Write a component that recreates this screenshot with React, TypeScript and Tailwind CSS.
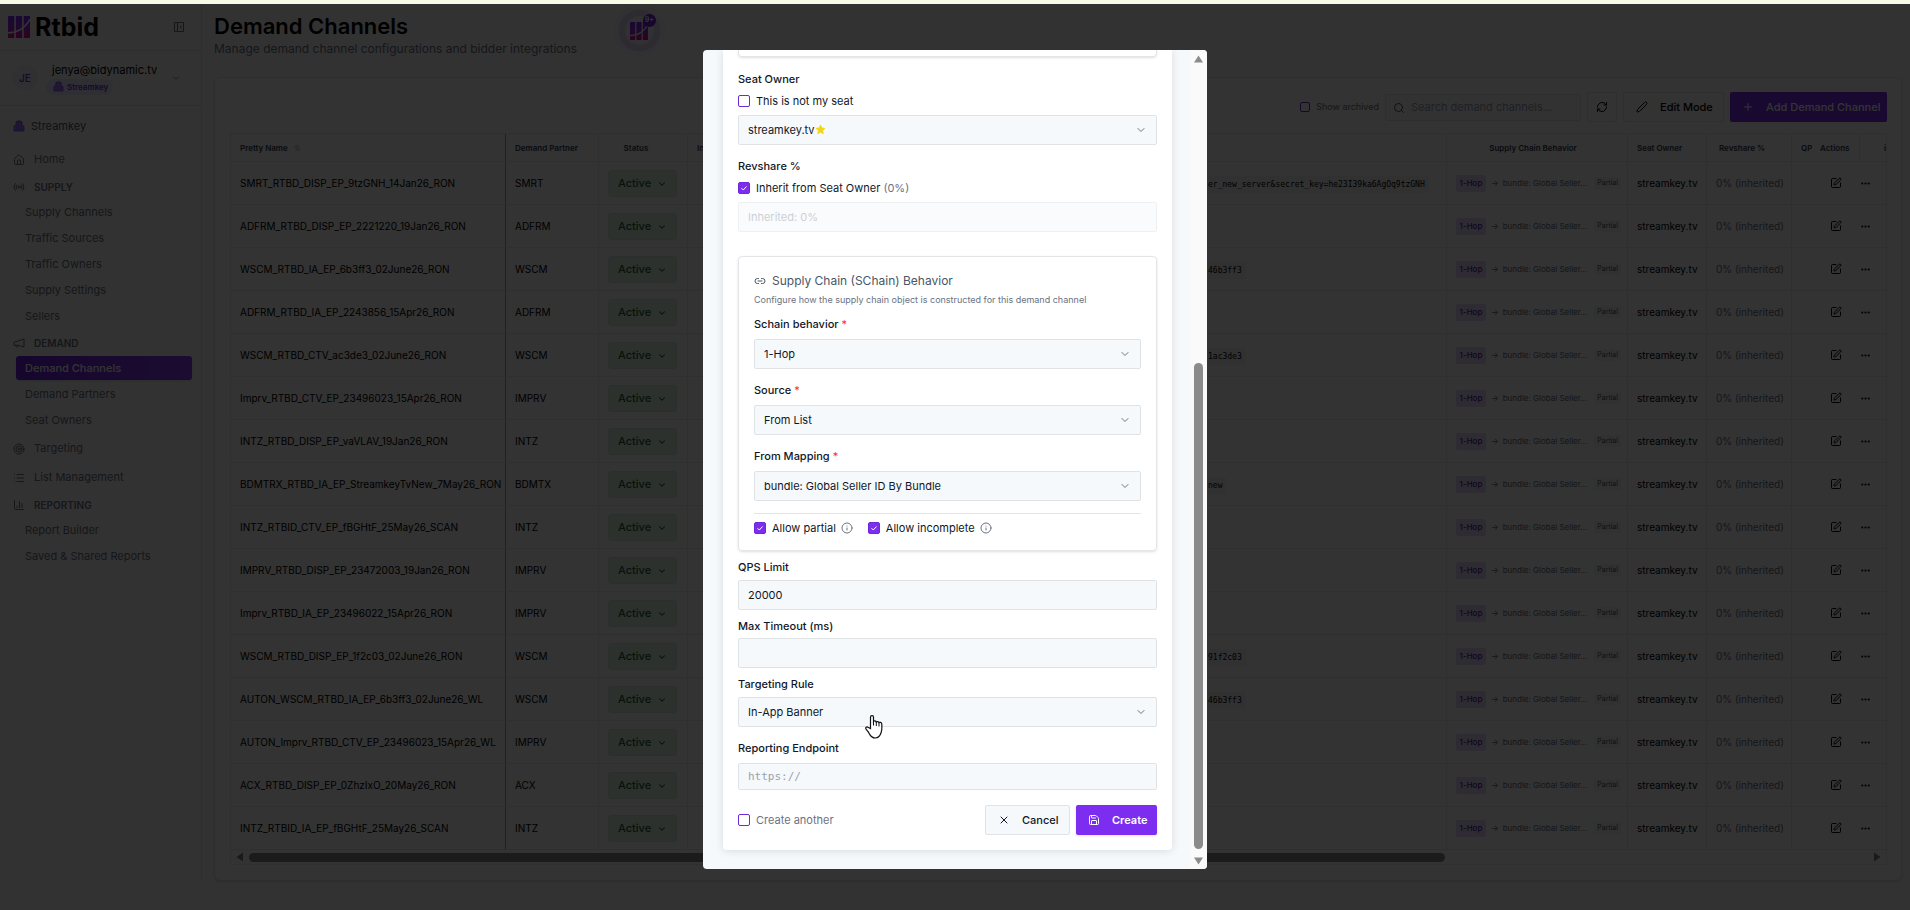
import React, { useState } from "react";
import {
  ChartColumn,
  ChevronDown,
  Ellipsis,
  House,
  Info,
  Link2,
  List,
  Pen,
  Plus,
  Radio,
  RefreshCw,
  Save,
  Search,
  SquarePen,
  Target,
  X,
} from "lucide-react";

const rows = [
  { name: "SMRT_RTBD_DISP_EP_9tzGNH_14Jan26_RON", partner: "SMRT", endpoint: "er_new_server&secret_key=he23I39ka6AgOq9tzGNH" },
  { name: "ADFRM_RTBD_DISP_EP_2221220_19Jan26_RON", partner: "ADFRM", endpoint: "" },
  { name: "WSCM_RTBD_IA_EP_6b3ff3_02June26_RON", partner: "WSCM", endpoint: "46b3ff3" },
  { name: "ADFRM_RTBD_IA_EP_2243856_15Apr26_RON", partner: "ADFRM", endpoint: "" },
  { name: "WSCM_RTBD_CTV_ac3de3_02June26_RON", partner: "WSCM", endpoint: "1ac3de3" },
  { name: "Imprv_RTBD_CTV_EP_23496023_15Apr26_RON", partner: "IMPRV", endpoint: "" },
  { name: "INTZ_RTBD_DISP_EP_vaVLAV_19Jan26_RON", partner: "INTZ", endpoint: "" },
  { name: "BDMTRX_RTBD_IA_EP_StreamkeyTvNew_7May26_RON", partner: "BDMTX", endpoint: "new" },
  { name: "INTZ_RTBID_CTV_EP_fBGHtF_25May26_SCAN", partner: "INTZ", endpoint: "" },
  { name: "IMPRV_RTBD_DISP_EP_23472003_19Jan26_RON", partner: "IMPRV", endpoint: "" },
  { name: "Imprv_RTBD_IA_EP_23496022_15Apr26_RON", partner: "IMPRV", endpoint: "" },
  { name: "WSCM_RTBD_DISP_EP_1f2c03_02June26_RON", partner: "WSCM", endpoint: "91f2c03" },
  { name: "AUTON_WSCM_RTBD_IA_EP_6b3ff3_02June26_WL", partner: "WSCM", endpoint: "46b3ff3" },
  { name: "AUTON_Imprv_RTBD_CTV_EP_23496023_15Apr26_WL", partner: "IMPRV", endpoint: "" },
  { name: "ACX_RTBD_DISP_EP_0ZhzIxO_20May26_RON", partner: "ACX", endpoint: "" },
  { name: "INTZ_RTBID_IA_EP_fBGHtF_25May26_SCAN", partner: "INTZ", endpoint: "" },
];

function LogoMark({ className }: { className?: string }) {
  return (
    <svg viewBox="0 0 42 42" className={className} aria-hidden="true">
      <defs>
        <linearGradient id="mark" x1="0" y1="0" x2="0" y2="1">
          <stop offset="0" stopColor="#7c2df5" />
          <stop offset="0.5" stopColor="#9d28e0" />
          <stop offset="1" stopColor="#e0108c" />
        </linearGradient>
        <clipPath id="bars">
          <rect x="0" y="0" width="12" height="42" rx="1" />
          <rect x="15" y="0" width="12" height="42" rx="1" />
          <rect x="30" y="0" width="12" height="42" rx="1" />
        </clipPath>
      </defs>
      <rect width="42" height="42" fill="url(#mark)" clipPath="url(#bars)" />
      <path d="M0 32C18 32 32 24 42 6" fill="none" stroke="#fafafa" strokeWidth="3" />
    </svg>
  );
}

function OrgIcon({ className }: { className?: string }) {
  return (
    <svg viewBox="0 0 24 24" className={className} aria-hidden="true">
      <path
        d="M5 6a5 5 0 0 1 5-5h4a5 5 0 0 1 5 5v4a4 4 0 0 1 4 4v6a3 3 0 0 1-3 3H4a3 3 0 0 1-3-3v-6a4 4 0 0 1 4-4z"
        fill="#8b5cf6"
      />
      <path d="M9 6v16M12 4v14M15 6v16M5 12v8M19 12v8" stroke="#fafafa" strokeOpacity="0.5" fill="none" />
    </svg>
  );
}

function CollapseIcon() {
  return (
    <svg viewBox="0 0 14 14" className="size-[14px] text-gray-500" fill="none" stroke="currentColor" aria-hidden="true">
      <path d="M2.500 2.500h9v9h-9zM5.500 2.500v9M9.500 5.500L8 7l1.500 1.500" />
    </svg>
  );
}

function HornIcon() {
  return (
    <svg viewBox="0 0 24 24" className="size-3" fill="none" stroke="currentColor" strokeWidth="2" strokeLinejoin="round" aria-hidden="true">
      <path d="M22 4v16L10 16.500H2v-6L22 4zM5 16.500c0 4.500 6 4.500 6 .5" />
    </svg>
  );
}

function Check({ id, label, defaultChecked = false, className = "", small = false }: {
  id: string;
  label: React.ReactNode;
  defaultChecked?: boolean;
  className?: string;
  small?: boolean;
}) {
  return (
    <label htmlFor={id} className={`flex items-center gap-[6px] ${className}`}>
      <span className="grid place-items-center">
        <input
          id={id}
          type="checkbox"
          defaultChecked={defaultChecked}
          className={`peer col-start-1 row-start-1 appearance-none rounded-[2px] border border-[#6d28d9] bg-white checked:bg-[#7c2df0] ${small ? "size-[10px]" : "size-3"}`}
        />
        <svg viewBox="0 0 12 12" className="pointer-events-none col-start-1 row-start-1 hidden size-3 peer-checked:block" aria-hidden="true">
          <path d="M3.500 6.200L5.300 8L8.500 4.500" fill="none" stroke="#fff" />
        </svg>
      </span>
      <span>{label}</span>
    </label>
  );
}

function SelectBox({ id, value, star = false }: { id: string; value: string; star?: boolean }) {
  return (
    <div className="relative">
      <select
        id={id}
        className="block h-[30px] w-full appearance-none rounded-[2px] border border-[#dfe3e6] bg-[#f6f9fb] px-[9px] text-[11px] text-gray-900"
      >
        <option>{value}</option>
      </select>
      {star && (
        <svg viewBox="0 0 24 24" className="pointer-events-none absolute top-[9px] left-[77px] size-[11px]" aria-hidden="true">
          <path
            d="M12 2.500l2.900 6.200 6.600.9-4.800 4.700 1.200 6.700-5.900-3.300L6.100 21l1.200-6.700L2.500 9.600l6.600-.9z"
            fill="#f5d414"
            stroke="#f5d414"
            strokeWidth="2"
            strokeLinejoin="round"
          />
        </svg>
      )}
      <ChevronDown className="pointer-events-none absolute top-[9px] right-[10px] size-3 text-gray-500" />
    </div>
  );
}

const inputClass =
  "w-full rounded-[2px] border border-[#dfe3e6] bg-[#f6f9fb] px-[9px] text-[11px] text-gray-900 placeholder:text-gray-400";
const labelClass = "block text-[11px] leading-4 font-medium text-gray-900";

function Required() {
  return <span className="font-normal text-red-500">*</span>;
}

function NavGroup({ icon, label }: { icon: React.ReactNode; label: string }) {
  return (
    <div className="flex h-[26px] items-center gap-[9px] pl-[13px] text-[10px] font-semibold text-gray-500">
      {icon}
      {label}
    </div>
  );
}

function NavTop({ icon, label }: { icon: React.ReactNode; label: string }) {
  return (
    <a href="#" className="flex h-[29px] items-center gap-[9px] pl-[13px] text-[11px] text-gray-500">
      {icon}
      {label}
    </a>
  );
}

function NavItem({ label, active = false }: { label: string; active?: boolean }) {
  return (
    <a
      href="#"
      className={`mr-[9px] mb-[2px] ml-4 flex h-6 items-center rounded-[3px] pl-[9px] text-[11px] ${
        active ? "bg-gradient-to-r from-[#6d1fe0] to-[#8b3df5] font-medium text-white shadow" : "text-gray-500"
      }`}
    >
      {label}
    </a>
  );
}

function Sidebar() {
  return (
    <aside className="w-[202px] shrink-0 border-r border-gray-200 bg-[#fafafa]">
      <div className="flex h-[47px] items-center border-b border-gray-200 pl-2">
        <LogoMark className="size-[22px]" />
        <span className="ml-[5px] text-[25px] leading-7 font-bold text-black">Rtbid</span>
        <button aria-label="Collapse sidebar" className="mr-[15px] ml-auto">
          <CollapseIcon />
        </button>
      </div>
      <div className="flex h-[55px] items-center border-b border-gray-200 pl-3">
        <span className="flex size-[26px] shrink-0 items-center justify-center rounded-full bg-[#f1ecfb] text-[10px] font-medium text-[#6d28d9]">
          JE
        </span>
        <div className="ml-2">
          <div className="pl-[6px] text-[11px] leading-4 text-black">jenya@bidynamic.tv</div>
          <span className="mt-px flex h-4 w-[67px] items-center gap-[3px] rounded-full bg-[#ece5fb] pl-[7px] text-[8px] font-semibold text-[#6d28d9]">
            <OrgIcon className="size-[11px]" />
            Streamkey
          </span>
        </div>
        <ChevronDown className="mr-[20px] ml-auto size-[10px] text-gray-500" />
      </div>
      <nav className="pt-[5px]">
        <a href="#" className="flex h-[30px] items-center gap-[6px] pl-[13px] text-[11px] text-gray-600">
          <OrgIcon className="size-3" />
          Streamkey
        </a>
        <div className="h-1" />
        <NavTop icon={<House className="size-3" />} label="Home" />
        <NavGroup icon={<Radio className="size-3" />} label="SUPPLY" />
        <NavItem label="Supply Channels" />
        <NavItem label="Traffic Sources" />
        <NavItem label="Traffic Owners" />
        <NavItem label="Supply Settings" />
        <NavItem label="Sellers" />
        <NavGroup icon={<HornIcon />} label="DEMAND" />
        <NavItem label="Demand Channels" active />
        <NavItem label="Demand Partners" />
        <NavItem label="Seat Owners" />
        <NavTop icon={<Target className="size-3" />} label="Targeting" />
        <NavTop icon={<List className="size-3" />} label="List Management" />
        <NavGroup icon={<ChartColumn className="size-3" />} label="REPORTING" />
        <NavItem label="Report Builder" />
        <NavItem label="Saved & Shared Reports" />
      </nav>
    </aside>
  );
}

const th = "h-7 truncate border-r border-b border-[#e8e8ea] text-[8px] font-semibold text-gray-700";
const td = "h-[43px] overflow-hidden whitespace-nowrap border-r border-b border-[#e8e8ea] pl-[9px]";

function ChannelTable() {
  return (
    <div className="border border-[#e8e8ea]">
      <table className="w-full table-fixed border-separate border-spacing-0 text-[10px] text-black">
        <colgroup>
          <col className="w-[275px]" />
          <col className="w-[93px]" />
          <col className="w-[89px]" />
          <col className="w-[511px]" />
          <col />
          <col className="w-[181px]" />
          <col className="w-[79px]" />
          <col className="w-[85px]" />
          <col className="w-[20px]" />
          <col className="w-[48px]" />
          <col className="w-[26px]" />
        </colgroup>
        <thead>
          <tr>
            <th className={`${th} border-r-gray-400 pl-[9px] text-left`}>
              Pretty Name <span className="ml-1 text-gray-300">⇅</span>
            </th>
            <th className={`${th} pl-[9px] text-left`}>Demand Partner</th>
            <th className={`${th} pr-[14px] text-center`}>Status</th>
            <th className={`${th} border-r-0 pl-[9px] text-left`}>Integration</th>
            <th className={th} aria-label="Endpoint" />
            <th className={`${th} pr-2 text-center`}>Supply Chain Behavior</th>
            <th className={`${th} pl-[9px] text-left`}>Seat Owner</th>
            <th className={`${th} pr-[14px] text-center`}>Revshare %</th>
            <th className="overflow-hidden border-b border-[#e8e8ea] pl-[9px] text-left text-[8px] font-semibold text-gray-700">QP</th>
            <th className="border-r border-b border-[#e8e8ea] pl-2 text-left text-[8px] font-semibold text-gray-700">Actions</th>
            <th className="border-b border-[#e8e8ea] text-right text-[8px] font-semibold text-gray-700">i</th>
          </tr>
        </thead>
        <tbody>
          {rows.map((row) => (
            <tr key={row.name}>
              <td className={`${td} border-r-gray-400`}>{row.name}</td>
              <td className={td}>{row.partner}</td>
              <td className={td}>
                <div className="relative w-[69px]">
                  <select
                    aria-label={`Status of ${row.name}`}
                    className="block h-[27px] w-full appearance-none rounded-[3px] border border-[#d2ecda] bg-[#e0f3e6] pl-[9px] text-[11px] font-medium text-[#166534]"
                  >
                    <option>Active</option>
                  </select>
                  <ChevronDown className="pointer-events-none absolute top-[9px] right-[10px] size-[10px] text-[#14532d]" strokeWidth={2.5} />
                </div>
              </td>
              <td className={`${td} border-r-0`} />
              <td className={td}>
                {row.endpoint && (
                  <code className="rounded-[2px] bg-gray-100 py-1 pr-1 font-['DejaVu_Sans_Mono',monospace] text-[8px]">{row.endpoint}</code>
                )}
              </td>
              <td className={td}>
                <div className="flex items-center pr-[6px] text-[8px] text-gray-500">
                  <span className="flex h-[17px] w-[30px] shrink-0 items-center justify-center rounded-[2px] bg-[#e6dafa] font-medium text-[#4c1d95]">
                    1-Hop
                  </span>
                  <span className="ml-[5px]">→</span>
                  <span className="ml-1">bundle: Global Seller...</span>
                  <span className="ml-auto rounded-[2px] bg-gray-100 px-[3px] text-[7px] leading-3 text-gray-600">Partial</span>
                </div>
              </td>
              <td className={td}>streamkey.tv</td>
              <td className={`${td} text-gray-500`}>0% (inherited)</td>
              <td className="border-b border-[#e8e8ea]" />
              <td className="border-b border-[#e8e8ea] pl-[18px]">
                <button aria-label="Edit channel" className="block">
                  <SquarePen className="size-3" />
                </button>
              </td>
              <td className="border-b border-[#e8e8ea]">
                <button aria-label="More actions" className="block">
                  <Ellipsis className="size-[11px]" strokeWidth={2.5} />
                </button>
              </td>
            </tr>
          ))}
        </tbody>
      </table>
      <div className="flex h-[14px] items-center px-[5px]" aria-hidden="true">
        <svg viewBox="0 0 8 10" className="h-[10px] w-2">
          <path d="M7 0.500v9L0.500 5z" fill="#808080" />
        </svg>
        <div className="ml-[5px] h-[9px] w-8/11 rounded-full bg-[#868686]" />
        <svg viewBox="0 0 8 10" className="ml-auto h-[10px] w-2">
          <path d="M1 0.500v9L7.500 5z" fill="#808080" />
        </svg>
      </div>
    </div>
  );
}

function Main() {
  return (
    <main className="min-w-0 flex-1 px-2 pt-2 pl-3">
      <div className="flex h-[45px] items-start">
        <div>
          <h1 className="text-[22px] leading-[29px] font-semibold text-black">Demand Channels</h1>
          <p className="text-[12px] leading-4 text-gray-500">Manage demand channel configurations and bidder integrations</p>
        </div>
        <button
          aria-label="Notifications"
          className="relative -mt-[2px] ml-[42px] flex size-[41px] shrink-0 items-center justify-center rounded-full border-[6px] border-[#e0d3ef] bg-[#f3edf9] shadow-[0_0_10px_#e9d5ff]"
        >
          <LogoMark className="size-[18px]" />
          <span className="absolute -top-[2px] -right-[2px] flex size-[13px] items-center justify-center rounded-full bg-[#6d1fe0] text-[7px] font-bold text-white">
            9+
          </span>
        </button>
      </div>
      <section className="mt-5 rounded-md border border-gray-200 bg-[#fcfcfc] p-[14px] pb-[15px] pl-[15px] shadow-sm">
        <div className="mb-[11px] flex h-[30px] items-center justify-end gap-[6px]">
          <Check id="archived" small label="Show archived" className="text-[9px] text-gray-500" />
          <div className="relative">
            <Search className="pointer-events-none absolute top-2 left-2 size-3 text-gray-600" />
            <input
              aria-label="Search demand channels"
              placeholder="Search demand channels..."
              className="block h-[27px] w-[196px] rounded-[2px] border border-gray-200 bg-[#f9fafb] pl-[25px] text-[11px] placeholder:text-gray-400"
            />
          </div>
          <button aria-label="Refresh" className="flex size-[30px] items-center justify-center rounded-[2px] border border-gray-200">
            <RefreshCw className="size-3" />
          </button>
          <button className="flex h-[30px] w-[101px] items-center rounded-[2px] border border-gray-200 pl-3 text-[11px] font-medium text-black">
            <Pen className="mr-3 size-3" />
            Edit Mode
          </button>
          <button className="flex h-[30px] w-[157px] items-center rounded-[2px] bg-[#7c2df0] pl-3 text-[11px] font-medium text-white">
            <Plus className="mr-3 size-3" />
            Add Demand Channel
          </button>
        </div>
        <ChannelTable />
      </section>
    </main>
  );
}

function Dialog() {
  const [qps, setQps] = useState("20000");
  return (
    <div
      role="dialog"
      aria-modal="true"
      aria-label="Create demand channel"
      className="flex w-[504px] overflow-hidden rounded-[4px] bg-[#f6f9fb] text-gray-900"
    >
      <form className="mr-[18px] mb-[19px] ml-5 flex-1 rounded-b-[4px] bg-white px-[15px] pb-[15px] shadow-[0_1px_8px_#0000001f]">
        <div className="mb-[14px] h-[7px] rounded-b-[4px] border-x border-b border-[#e3e5e8] shadow-sm" />
        <label htmlFor="seat" className={labelClass}>Seat Owner</label>
        <Check id="not-mine" label="This is not my seat" className="mt-[6px] mb-[6px] h-4 text-[11px]" />
        <SelectBox id="seat" value="streamkey.tv" star />

        <label htmlFor="revshare" className={`${labelClass} mt-[13px]`}>Revshare %</label>
        <Check
          id="inherit"
          defaultChecked
          label={<>Inherit from Seat Owner <span className="text-gray-500">(0%)</span></>}
          className="mt-[6px] mb-[6px] h-4 text-[11px]"
        />
        <input id="revshare" disabled placeholder="Inherited: 0%" className={`${inputClass} block h-[30px] opacity-50`} />

        <section className="mt-6 mb-2 rounded-[4px] border border-[#e3e5e8] px-[15px] pt-4 pb-[14px] shadow-sm">
          <h2 className="flex items-center gap-[6px] text-[12px] leading-4 text-gray-600">
            <Link2 className="size-3" />
            Supply Chain (SChain) Behavior
          </h2>
          <p className="mt-[3px] text-[9px] leading-4 text-gray-500">
            Configure how the supply chain object is constructed for this demand channel
          </p>
          <label htmlFor="behavior" className={`${labelClass} mt-2 mb-[7px]`}>Schain behavior <Required /></label>
          <SelectBox id="behavior" value="1-Hop" />
          <label htmlFor="source" className={`${labelClass} mt-[13px] mb-[7px]`}>Source <Required /></label>
          <SelectBox id="source" value="From List" />
          <label htmlFor="mapping" className={`${labelClass} mt-[13px] mb-[7px]`}>From Mapping <Required /></label>
          <SelectBox id="mapping" value="bundle: Global Seller ID By Bundle" />
          <div className="mt-3 flex items-center border-t border-[#e3e5e8] pt-[6px] text-[11px]">
            <Check id="partial" defaultChecked label="Allow partial" className="h-4" />
            <Info className="ml-[5px] size-3 text-gray-500" />
            <Check id="incomplete" defaultChecked label="Allow incomplete" className="ml-[15px] h-4" />
            <Info className="ml-[5px] size-3 text-gray-500" />
          </div>
        </section>

        <label htmlFor="qps" className={`${labelClass} mb-[5px]`}>QPS Limit</label>
        <input id="qps" value={qps} onChange={(e) => setQps(e.target.value)} className={`${inputClass} block h-[30px]`} />
        <label htmlFor="timeout" className={`${labelClass} mt-2 mb-1`}>Max Timeout (ms)</label>
        <input id="timeout" className={`${inputClass} block h-[30px]`} />
        <label htmlFor="rule" className={`${labelClass} mt-2 mb-[5px]`}>Targeting Rule</label>
        <SelectBox id="rule" value="In-App Banner" />
        <label htmlFor="endpoint" className={`${labelClass} mt-[13px] mb-[7px]`}>Reporting Endpoint</label>
        <input
          id="endpoint"
          placeholder="https://"
          className={`${inputClass} block h-[27px] font-['DejaVu_Sans_Mono',monospace]`}
        />
        <div className="mt-[15px] flex items-center">
          <Check id="another" label="Create another" className="text-[11px] text-gray-500" />
          <button
            type="button"
            className="ml-auto flex h-[30px] w-[85px] items-center rounded-[2px] border border-[#dfe3e6] bg-[#f6f9fb] pl-3 text-[11px] font-medium"
          >
            <X className="mr-3 size-3" />
            Cancel
          </button>
          <button
            type="button"
            className="ml-[6px] flex h-[30px] w-[81px] items-center rounded-[2px] bg-[#7c2df0] pl-3 text-[11px] font-semibold text-white shadow"
          >
            <Save className="mr-3 size-3" />
            Create
          </button>
        </div>
      </form>
      <div className="flex w-[17px] flex-col items-center bg-[#fafafa] pt-[5px] pb-[4px]" aria-hidden="true">
        <svg viewBox="0 0 9 8" className="h-2 w-[9px]">
          <path d="M4.500 0.500L9 7.500H0z" fill="#8b8b8b" />
        </svg>
        <div className="mt-auto h-[486px] w-[9px] rounded-full bg-[#8b8b8b]" />
        <svg viewBox="0 0 9 8" className="mt-2 h-2 w-[9px]">
          <path d="M4.500 7.500L9 0.500H0z" fill="#8b8b8b" />
        </svg>
      </div>
    </div>
  );
}

function HandCursor() {
  return (
    <svg viewBox="0 0 18 24" className="pointer-events-none absolute top-[715px] left-[865px] z-20 h-6 w-[18px]" aria-hidden="true">
      <path
        d="M5.500 13.500V2.200a1.500 1.500 0 0 1 3 0V6.500c.6-.9 2.500-.7 2.800.5.700-.8 2.400-.5 2.700.6.900-.6 2.500-.200 2.700 1.100.300 3 .3 6.300-.5 8.600-.8 2.500-1.500 5.700-6 5.700-3.800 0-4.800-2.300-6-4.500-.9-1.700-2.500-3.300-3.300-4.800-.6-1.300.8-2.200 2-1.500z"
        fill="#fff"
        stroke="#111"
        strokeWidth="1.200"
      />
      <path d="M8.500 6.500v4M11.300 7v4M14 8v3.500" stroke="#111" />
    </svg>
  );
}

export default function App() {
  return (
    <div className="relative min-h-screen bg-[#fafafa] font-['Inter',sans-serif]">
      <div className="h-1 bg-[#f8fce6]" />
      <div className="flex">
        <Sidebar />
        <Main />
      </div>
      <div className="absolute inset-x-0 top-1 bottom-0 z-10 flex items-start justify-center bg-black/80 pt-[46px]">
        <Dialog />
      </div>
      <HandCursor />
    </div>
  );
}
